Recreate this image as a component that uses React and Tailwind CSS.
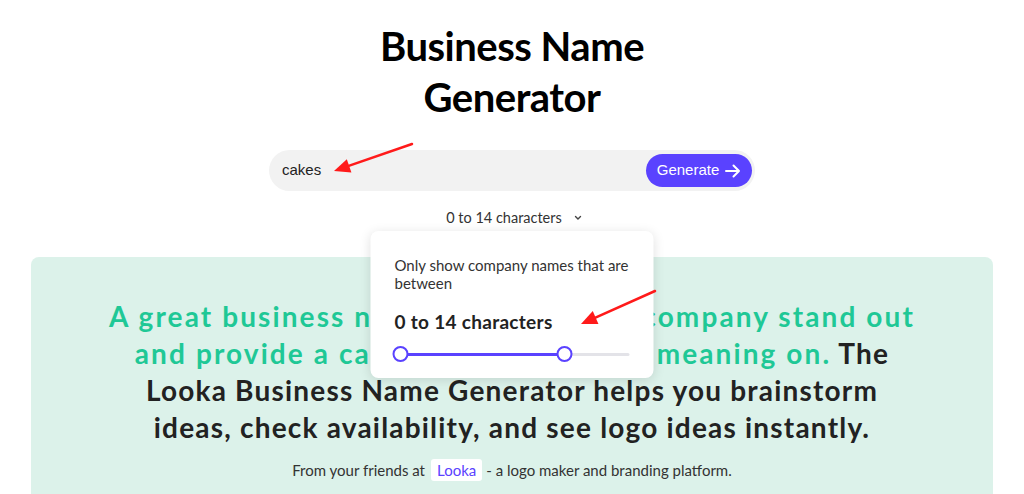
import React from "react";

function Arrow({ x1, y1, x2, y2 }) {
  const dx = x2 - x1;
  const dy = y2 - y1;
  const len = Math.hypot(dx, dy);
  const ux = dx / len;
  const uy = dy / len;
  const hl = 16;
  const hw = 7;
  const bx = x2 - ux * hl;
  const by = y2 - uy * hl;
  const p1 = `${x2},${y2}`;
  const p2 = `${bx - uy * hw},${by + ux * hw}`;
  const p3 = `${bx + uy * hw},${by - ux * hw}`;
  return (
    <g>
      <line x1={x1} y1={y1} x2={bx + ux * 2} y2={by + uy * 2} stroke="#ff1a1a" strokeWidth="2.5" strokeLinecap="round" />
      <polygon points={`${p1} ${p2} ${p3}`} fill="#ff1a1a" />
    </g>
  );
}

export default function App() {
  return (
    <div className="relative w-full min-h-[494px] bg-white overflow-hidden" style={{ fontFamily: "Lato, 'Open Sans', sans-serif" }}>
      <div className="flex flex-col items-center">
        <h1 className="mt-[21px] text-[40px] leading-[51px] font-bold text-black text-center tracking-[-0.5px]">
          Business Name
          <br />
          Generator
        </h1>

        <div className="mt-[27px] w-[486px] h-[41px] rounded-full bg-[#f2f2f2] flex items-center justify-between pl-[13px] pr-[3px]">
          <span className="text-[15px] text-[#222]" style={{ fontFamily: "Arial, 'Liberation Sans', sans-serif" }}>cakes</span>
          <button className="h-[33px] w-[106px] rounded-full bg-[#5a42ff] text-white text-[15px] flex items-center justify-center gap-[6px]" style={{ fontFamily: "Arial, 'Liberation Sans', sans-serif" }}>
            Generate
            <svg width="16" height="14" viewBox="0 0 16 14" fill="none" stroke="white" strokeWidth="2" strokeLinecap="round" strokeLinejoin="round">
              <path d="M1 7h13M8.5 1.5 14 7l-5.5 5.5" />
            </svg>
          </button>
        </div>

        <div className="relative w-full flex justify-center mt-[17px]">
          <div className="flex items-center h-[20px] text-[14.5px] text-[#333] ml-[4px]">
            <span>0 to 14 characters</span>
            <svg className="ml-[12px]" width="8" height="6" viewBox="0 0 8 6" fill="none" stroke="#444" strokeWidth="1.4" strokeLinecap="round">
              <path d="M1.5 1.5 4 4l2.5-2.5" />
            </svg>
          </div>

          <div className="absolute z-10 top-[23px] left-1/2 -translate-x-1/2 w-[283px] bg-white rounded-[8px] shadow-[0_2px_12px_rgba(0,0,0,0.12)] px-[24px] pt-[25px] pb-[16px]">
            <p className="text-[15px] leading-[18px] text-[#333]">Only show company names that are between</p>
            <p className="mt-[18px] text-[19px] leading-[24px] font-bold text-[#222] tracking-[0.3px]">0 to 14 characters</p>
            <div className="relative mt-[12px] h-[16px] w-full">
              <div className="absolute left-[6px] right-0 top-[7px] h-[3px] rounded-full bg-[#e3e3e8]" />
              <div className="absolute left-[6px] w-[164px] top-[7px] h-[3px] bg-[#5a42ff]" />
              <div className="absolute left-[-2px] top-0 w-[16px] h-[16px] rounded-full bg-white border-2 border-[#5a42ff]" />
              <div className="absolute left-[162px] top-0 w-[16px] h-[16px] rounded-full bg-white border-2 border-[#5a42ff]" />
            </div>
          </div>
        </div>

        <div className="mt-[29px] w-[calc(100%-62px)] rounded-[8px] bg-[#dcf2ea] flex flex-col items-center pt-[41px] pb-[40px]">
          <p className="text-center text-[28px] leading-[37px] font-bold text-[#222] tracking-[1.2px] whitespace-nowrap">
            <span className="text-[#1fc896] tracking-[2.1px]">A great business name can help your company stand out</span>
            <br />
            <span className="text-[#1fc896] tracking-[2.1px]">and provide a canvas to build brand meaning on.</span> The
            <br />
            Looka Business Name Generator helps you brainstorm
            <br />
            ideas, check availability, and see logo ideas instantly.
          </p>
          <div className="mt-[13px] flex items-center text-[15px] text-[#333] h-[22px]">
            <span>From your friends at</span>
            <span className="ml-[6px] mr-[4px] bg-white rounded-[3px] px-[6px] h-[22px] flex items-center text-[#5a42ff]">Looka</span>
            <span>- a logo maker and branding platform.</span>
          </div>
        </div>
      </div>

      <svg className="absolute inset-0 pointer-events-none z-20" width="1024" height="494">
        <Arrow x1={412} y1={144} x2={334} y2={171} />
        <Arrow x1={655} y1={291} x2={581} y2={324} />
      </svg>
    </div>
  );
}
